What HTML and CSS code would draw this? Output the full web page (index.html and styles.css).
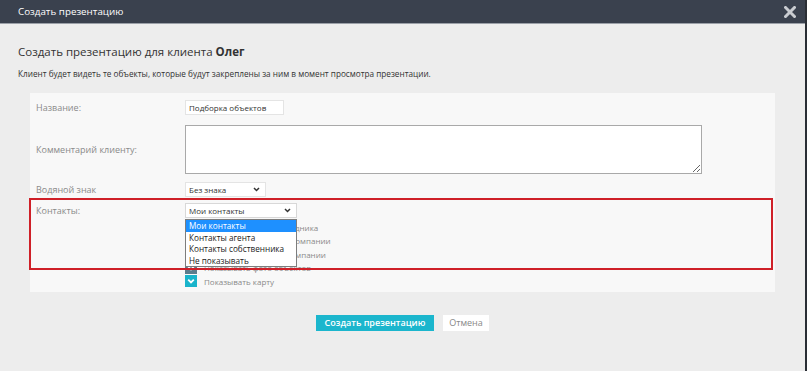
FILE: index.html
```html
<!DOCTYPE html>
<html lang="ru">
<head>
<meta charset="utf-8">
<link rel="stylesheet" href="styles.css">
</head>
<body>
<div class="dialog">
  <div class="titlebar">
    <span class="title">Создать презентацию</span>
    <svg class="close" width="12" height="12" viewBox="0 0 12 12"><path d="M1.5 1.5 L10.5 10.5 M10.5 1.5 L1.5 10.5" stroke="#c9ccd1" stroke-width="3" stroke-linecap="square"/></svg>
  </div>
  <div class="content">
    <h1 class="heading">Создать презентацию для клиента <b>Олег</b></h1>
    <p class="sub">Клиент будет видеть те объекты, которые будут закреплены за ним в момент просмотра презентации.</p>
    <div class="panel">
      <div class="row r-name">
        <div class="label">Название:</div>
        <div class="field"><input class="text" value="Подборка объектов"></div>
      </div>
      <div class="row r-comment">
        <div class="label">Комментарий клиенту:</div>
        <div class="field"><textarea class="area"></textarea></div>
      </div>
      <div class="row r-water">
        <div class="label">Водяной знак</div>
        <div class="field">
          <div class="select s-water">Без знака<svg class="chev" width="7" height="5" viewBox="0 0 7 5"><path d="M1 1 L3.5 3.5 L6 1" fill="none" stroke="#333" stroke-width="1.5"/></svg></div>
        </div>
      </div>
      <div class="row r-contacts">
        <div class="label lab-top">Контакты:</div>
        <div class="field">
          <div class="selwrap">
            <div class="select s-contacts">Мои контакты<svg class="chev" width="7" height="5" viewBox="0 0 7 5"><path d="M1 1 L3.5 3.5 L6 1" fill="none" stroke="#333" stroke-width="1.5"/></svg></div>
            <ul class="menu">
              <li class="on">Мои контакты</li>
              <li>Контакты агента</li>
              <li>Контакты собственника</li>
              <li>Не показывать</li>
            </ul>
          </div>
          <div class="checks">
            <div class="check"><span class="box"><svg width="12" height="12" viewBox="0 0 12 12"><path d="M3.2 4.6 L6 7.4 L8.8 4.6" fill="none" stroke="#fff" stroke-width="1.8"/></svg></span>Показывать ФИО сотрудника</div>
            <div class="check"><span class="box"><svg width="12" height="12" viewBox="0 0 12 12"><path d="M3.2 4.6 L6 7.4 L8.8 4.6" fill="none" stroke="#fff" stroke-width="1.8"/></svg></span>Показывать контакты компании</div>
            <div class="check"><span class="box"><svg width="12" height="12" viewBox="0 0 12 12"><path d="M3.2 4.6 L6 7.4 L8.8 4.6" fill="none" stroke="#fff" stroke-width="1.8"/></svg></span>Показывать логотип компании</div>
            <div class="check"><span class="box dim"><svg width="12" height="12" viewBox="0 0 12 12"><path d="M3.2 4.6 L6 7.4 L8.8 4.6" fill="none" stroke="#fff" stroke-width="1.8"/></svg></span>Показывать фото объектов</div>
            <div class="check"><span class="box"><svg width="12" height="12" viewBox="0 0 12 12"><path d="M3.2 4.6 L6 7.4 L8.8 4.6" fill="none" stroke="#fff" stroke-width="1.8"/></svg></span>Показывать карту</div>
          </div>
        </div>
      </div>
      <div class="highlight"></div>
    </div>
    <div class="actions">
      <button class="btn primary">Создать презентацию</button>
      <button class="btn plain">Отмена</button>
    </div>
  </div>
</div>
</body>
</html>
```

FILE: styles.css
```css
html, body {
  margin: 0;
  padding: 0;
  height: 100%;
  background: #2a2e35;
  font-family: "Open Sans", "Liberation Sans", sans-serif;
}
.dialog {
  width: 805px;
  height: 371px;
  background: #ededed;
  overflow: hidden;
}
.titlebar {
  height: 23px;
  background: #3a414e;
  border-bottom: 1px solid #9ba0a8;
  display: flex;
  align-items: center;
  justify-content: space-between;
  padding: 0 9px 0 18px;
}
.title {
  color: #fff;
  font-size: 9.8px;
}
.close {
  display: block;
}
.heading {
  margin: 0;
  padding: 19px 0 0 18px;
  font-size: 11.5px;
  font-weight: 400;
  color: #333;
  line-height: 18px;
}
.heading b {
  font-weight: 700;
}
.sub {
  margin: 0;
  padding: 5.5px 0 0 18px;
  font-size: 8.2px;
  color: #333;
  line-height: 13px;
}
.panel {
  position: relative;
  margin: 13.5px 0 0 30px;
  width: 745px;
  background: #f8f8f8;
  padding: 7px 0 5px 0;
  box-sizing: border-box;
}
.row {
  display: grid;
  grid-template-columns: 155px 1fr;
  align-items: center;
}
.label {
  padding-left: 6px;
  font-size: 9px;
  color: #8a8a8a;
}
.lab-top {
  align-self: start;
  line-height: 15px;
}
.r-comment { margin-top: 10px; }
.r-water { margin-top: 8px; }
.r-contacts { margin-top: 6px; align-items: start; }
.field {
  display: flex;
  flex-direction: column;
  align-items: flex-start;
}
.text {
  width: 99px;
  height: 15px;
  box-sizing: border-box;
  border: 1px solid #e4e4e4;
  background: #fff;
  font-family: inherit;
  font-size: 8px;
  color: #333;
  padding: 0 3px;
  margin: 0;
  outline: none;
}
.area {
  display: block;
  width: 517px;
  height: 49px;
  box-sizing: border-box;
  border: 1px solid #a9a9a9;
  background: #fff;
  margin: 0;
  padding: 2px;
  resize: both;
  font-family: inherit;
}
.select {
  display: flex;
  align-items: center;
  justify-content: space-between;
  height: 15px;
  box-sizing: border-box;
  background: #fff;
  border: 1px solid #e4e4e4;
  font-size: 8px;
  color: #333;
  padding: 0 5px 0 3px;
  white-space: nowrap;
}
.s-water { width: 81px; }
.s-contacts { width: 112px; border-color: #d8d8d8; }
.chev { display: block; }
.selwrap {
  position: relative;
}
.menu {
  position: absolute;
  top: 16px;
  left: 0;
  width: 112px;
  box-sizing: border-box;
  margin: 0;
  padding: 0;
  list-style: none;
  background: #fff;
  border: 1px solid #7d7d7d;
  z-index: 2;
}
.menu li {
  font-size: 8.2px;
  color: #222;
  height: 11.5px;
  line-height: 11.5px;
  padding-left: 3px;
  white-space: nowrap;
}
.menu li.on {
  background: #1e90ff;
  color: #fff;
}
.checks {
  margin-top: 3px;
  display: flex;
  flex-direction: column;
  gap: 1.5px;
}
.check {
  display: flex;
  align-items: center;
  height: 12px;
  font-size: 8px;
  color: #8a8a8a;
  white-space: nowrap;
}
.box {
  width: 12px;
  height: 12px;
  background: #1ab4cb;
  margin-right: 7px;
  display: flex;
}
.box.dim {
  background: #5d7d8d;
}
.highlight {
  position: absolute;
  left: -1px;
  top: 105px;
  width: 744px;
  height: 72px;
  box-sizing: border-box;
  border: 2px solid #cf2028;
  z-index: 3;
  pointer-events: none;
}
.actions {
  display: flex;
  justify-content: center;
  gap: 9px;
  margin-top: 23px;
}
.btn {
  height: 16px;
  border: none;
  margin: 0;
  font-family: inherit;
  font-size: 9px;
  line-height: 16px;
  padding: 0 4px;
  white-space: nowrap;
}
.primary {
  background: #1bb6cd;
  color: #fff;
  font-weight: 600;
  width: 118px;
}
.plain {
  background: #fff;
  color: #888;
  width: 46px;
}
```
